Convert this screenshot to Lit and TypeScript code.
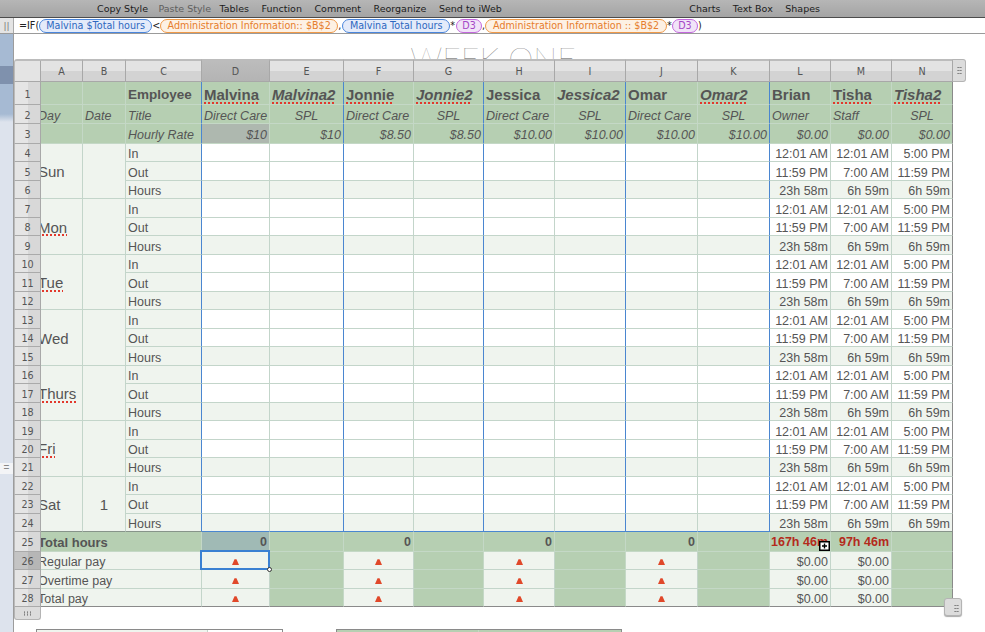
import { LitElement, html, css, nothing } from "lit";
import { customElement } from "lit/decorators.js";

const COLS = ["A", "B", "C", "D", "E", "F", "G", "H", "I", "J", "K", "L", "M", "N"];
const NAMES: [string, boolean, boolean][] = [
  ["Malvina", false, true], ["Malvina2", true, true], ["Jonnie", false, true], ["Jonnie2", true, true],
  ["Jessica", false, false], ["Jessica2", true, false], ["Omar", false, false], ["Omar2", true, true],
  ["Brian", false, false], ["Tisha", false, true], ["Tisha2", true, true],
];
const TITLES: [string, string][] = [
  ["Direct Care", "l"], ["SPL", "c"], ["Direct Care", "l"], ["SPL", "c"], ["Direct Care", "l"], ["SPL", "c"],
  ["Direct Care", "l"], ["SPL", "c"], ["Owner", "l"], ["Staff", "l"], ["SPL", "c"],
];
const RATES = ["$10", "$10", "$8.50", "$8.50", "$10.00", "$10.00", "$10.00", "$10.00", "$0.00", "$0.00", "$0.00"];
const DAYS: [string, boolean, string][] = [
  ["Sun", false, ""], ["Mon", true, ""], ["Tue", true, ""], ["Wed", false, ""],
  ["Thurs", true, ""], ["Fri", true, ""], ["Sat", false, "1"],
];
const TIMES = [
  ["12:01 AM", "12:01 AM", "5:00 PM"],
  ["11:59 PM", "7:00 AM", "11:59 PM"],
  ["23h 58m", "6h 59m", "6h 59m"],
];
const VALUE_COLS = [0, 1, 2, 3, 4, 5, 6, 7, 8, 9, 10];

@customElement("app-root")
export class AppRoot extends LitElement {
  static styles = css`
    :host { display: block; width: 985px; height: 632px; overflow: hidden; background: #fff; font-family: "Liberation Sans", Arial, sans-serif; }
    .toolbar { height: 17px; display: flex; align-items: center; padding-left: 97px; gap: 12.5px; background: linear-gradient(#b6b6b6, #a4a4a4); border-bottom: 1px solid #4c4c4c; font: 9.5px "DejaVu Sans", sans-serif; color: #1c1c1c; }
    .toolbar .copy { margin-right: -2px; }
    .toolbar .off { color: #5f5f5f; margin-right: -4px; }
    .toolbar .right { margin-left: 175px; }
    .formula { height: 15px; display: flex; align-items: center; border-bottom: 1px solid #9a9a9a; background: #fff; font: 9.6px "DejaVu Sans", sans-serif; color: #222; }
    .grip { width: 13px; height: 100%; box-sizing: content-box; border-right: 1px solid #aaa; background: #e4e4e4; color: #777; display: flex; align-items: center; justify-content: center; font-size: 9px; }
    .ftext { padding-left: 5px; display: flex; align-items: center; white-space: pre; }
    .ftext .sp { padding-right: 1px; }
    .tok { box-sizing: border-box; height: 14px; border: 1px solid; border-radius: 7px; display: inline-flex; align-items: center; justify-content: center; }
    .tok.b { color: #2e68c0; border-color: #4a86dc; background: #e4ebfa; }
    .tok.o { color: #e67d2c; border-color: #f09a48; background: #fdf1e4; }
    .tok.p { color: #a548c6; border-color: #c468de; background: #f1e4f8; }
    .main { display: flex; height: 598px; }
    .side { width: 13px; flex: none; border-right: 1px solid #9c9c9c; background: #dde3ed; display: flex; flex-direction: column; }
    .side .blue { height: 88px; background: linear-gradient(#a6bad3 0 32px, #7f91ad 32px 50px, #a6bad3 50px 80px, #dde3ed); }
    .side .split { margin-top: 341px; height: 11px; background: #f3f4f6; color: #888; font-size: 10px; line-height: 10px; text-align: center; }
    .canvas { flex: 1; min-width: 0; overflow: hidden; }
    .title { height: 25px; overflow: hidden; text-align: center; box-sizing: border-box; padding: 8px 0 0 0; margin-left: -13px; font: 100 32px/32px Lato, sans-serif; color: #555; white-space: nowrap; }
    .wrap { position: relative; width: 939px; }
    .grid { display: grid; grid-template-columns: 27px 42px 43px 76px 68px 74px 70px 70px 71px 71px 72px 72px 61px 61px 61px; grid-template-rows: 23px 23px 19px 20px repeat(21, 18.486px) 20px 18px 19px 18px; }
    .ch { box-sizing: border-box; display: flex; align-items: center; justify-content: center; background: linear-gradient(#e3e3e3 0 50%, #d3d3d3 50%); border-top: 2px solid #bcbcbc; border-right: 1px solid #a8a8a8; border-bottom: 1px solid #a8a8a8; font: 9.6px "DejaVu Sans", sans-serif; color: #555; }
    .ch.sel { background: linear-gradient(#bcbcbc, #b4b4b4); }
    .ch.corner { background: #e4e4e4; border-left: 1px solid #bbb; border-radius: 3px 0 0 0; }
    .rh { box-sizing: border-box; display: flex; align-items: center; justify-content: center; padding-top: 2px; background: linear-gradient(90deg, #e5e5e5 0 13px, #d8d8d8 13px); border-left: 1px solid #bbb; border-right: 1px solid #a8a8a8; border-bottom: 1px solid #aaa; font: 9.6px "DejaVu Sans", sans-serif; color: #555; }
    .rh.sel { background: linear-gradient(90deg, #c4c4c4 0 13px, #b6b6b6 13px); }
    .c { box-sizing: border-box; display: flex; align-items: center; min-width: 0; padding: 3px 2px 0; overflow: hidden; white-space: nowrap; font-size: 12.5px; color: #555; border-right: 1px solid #c3d5ca; border-bottom: 1px solid #c3d5ca; background: #fff; }
    .c.g { background: #b6cfb2; border-color: #c4d8c6; }
    .c.t { background: #eff4ee; }
    .c.dark { background: #aeb8af; }
    .c.teal { background: #a0bab5; }
    .c.it { font-style: italic; }
    .c.bold { font-weight: 700; padding-top: 1px; }
    .c.r { justify-content: flex-end; }
    .c.ce { justify-content: center; }
    .c.big { font-size: 15px; padding-top: 1px; }
    .c.emp { font-size: 13.5px; font-weight: 700; }
    .c.name { font-size: 15px; font-weight: 700; }
    .c.total { font-size: 13px; }
    .c.red { color: #b42a1c; }
    .c.blue-r { border-right-color: #4a86d0; }
    .c.blue-b { border-bottom-color: #4a86d0; }
    .c.gray-b { border-bottom-color: #87948a; }
    .c.edge-r { border-right-color: #8a8a8a; }
    .c.edge-b { border-bottom-color: #8a8a8a; }
    .c.s3 { grid-row: span 3; }
    .c.w3 { grid-column: span 3; }
    .c.over { overflow: visible; position: relative; }
    .cut { margin-left: -5px; }
    .sq { text-decoration: underline dotted #e2382c 2px; text-underline-offset: 2px; }
    .tri { width: 7px; height: 6px; display: block; }
    .selbox { position: absolute; left: -2px; top: -2px; width: 70px; height: 20px; box-sizing: border-box; border: 2px solid #3a80d2; z-index: 2; }
    .dot { position: absolute; right: -4px; bottom: -4px; width: 5px; height: 5px; box-sizing: border-box; border: 1px solid #333; border-radius: 50%; background: #fff; }
    .cursor { position: absolute; right: 0; bottom: 0; width: 11px; height: 10px; z-index: 2; display: block; }
    .h { position: absolute; box-sizing: border-box; background: #dcdcdc; border: 1px solid #b4b4b4; color: #777; display: flex; align-items: center; justify-content: center; }
    .h i { display: block; width: 5px; height: 9px; background: radial-gradient(circle, #777 0 0.7px, transparent 1px) 0 0 / 2.5px 3px; }
    .h.top { left: 939px; top: 0; width: 13px; height: 23px; border-left: 0; border-radius: 0 3px 3px 0; }
    .h.bl { left: 0; top: 548px; width: 27px; height: 13px; border-top: 0; border-radius: 0 0 3px 3px; }
    .h.bl i { width: 10px; height: 5px; background-size: 3px 2.5px; }
    .h.br { left: 930px; top: 539px; width: 18px; height: 18px; border-radius: 3px; box-shadow: 0 1px 1px #aaa; align-items: flex-end; justify-content: flex-end; padding: 2px; }
    .lower { display: flex; padding: 22px 0 0 22px; gap: 53px; }
    .lt { display: flex; height: 20px; box-sizing: border-box; border: 1px solid #8a8a8a; }
    .lt.a { width: 247px; }
    .lt.a div:first-child { width: 170px; background: #eff4ee; border-right: 1px solid #c3d5ca; }
    .lt.b { width: 286px; background: #b6cfb2; }
    .lt.b div:first-child { width: 141px; border-right: 1px solid #c4d8c6; }
  `;

  /** Right-border class for value column i (0 = D … 10 = N). */
  private sec(i: number) {
    if (i === 10) return "edge-r";
    return i % 2 === 1 && i < 8 ? "blue-r" : "";
  }

  private triangle() {
    return html`<svg class="tri" viewBox="0 0 7 6"><path d="M2.5 0.2h2L7 6H0z" fill="#e0482a"/></svg>`;
  }

  private payRow(num: number, label: string, bottom: boolean) {
    const eb = bottom ? "edge-b" : "";
    return html`
      <div class="rh ${num === 26 ? "sel" : ""}">${num}</div>
      <div class="c t w3 ${eb}"><span class="cut">${label}</span></div>
      ${VALUE_COLS.map((i) => {
        if (i >= 8 && i < 10) return html`<div class="c t r ${eb}">$0.00</div>`;
        if (i === 10 || i % 2 === 1) return html`<div class="c g ${eb} ${i === 10 ? "edge-r" : ""}"></div>`;
        const sel = num === 26 && i === 0;
        return html`<div class="c t ce ${eb} ${sel ? "over" : ""}">${this.triangle()}${sel ? html`<div class="selbox"><div class="dot"></div></div>` : nothing}</div>`;
      })}
    `;
  }

  private dayBlock(d: [string, boolean, string], idx: number) {
    const start = 4 + idx * 3;
    const last = idx === 6;
    return [0, 1, 2].map((k) => {
      const num = start + k;
      const lastRow = last && k === 2;
      return html`
        <div class="rh">${num}</div>
        ${k === 0
          ? html`
              <div class="c t s3 big ${last ? "gray-b" : ""}"><span class="cut ${d[1] ? "sq" : ""}">${d[0]}</span></div>
              <div class="c t s3 big ce ${last ? "gray-b" : ""}">${d[2]}</div>`
          : nothing}
        <div class="c t blue-r ${lastRow ? "gray-b" : ""}">${["In", "Out", "Hours"][k]}</div>
        ${VALUE_COLS.map((i) => {
          const bb = lastRow ? (i < 8 ? "blue-b" : "gray-b") : "";
          const tint = k === 2 ? "t" : "";
          if (i >= 8) return html`<div class="c r ${tint} ${bb} ${this.sec(i)}">${TIMES[k][i - 8]}</div>`;
          return html`<div class="c ${tint} ${bb} ${this.sec(i)}"></div>`;
        })}
      `;
    });
  }

  render() {
    return html`
      <div class="toolbar">
        <span class="copy">Copy Style</span><span class="off">Paste Style</span><span>Tables</span><span>Function</span><span>Comment</span><span>Reorganize</span><span>Send to iWeb</span>
        <span class="right">Charts</span><span>Text Box</span><span>Shapes</span>
      </div>
      <div class="formula">
        <div class="grip">||</div>
        <div class="ftext">=IF(<span class="tok b" style="width:113px">Malvina $Total hours</span><span>&lt;</span><span class="tok o" style="width:178px">Administration Information:: $B$2</span><span class="sp">,</span><span class="tok b" style="width:108px">Malvina Total hours</span><span class="sp">*</span><span class="tok p" style="width:26px">D3</span><span>,</span><span class="tok o" style="width:182px">Administration Information :: $B$2</span><span>*</span><span class="tok p" style="width:26px">D3</span><span>)</span></div>
      </div>
      <div class="main">
        <div class="side"><div class="blue"></div><div class="split">=</div></div>
        <div class="canvas">
          <div class="title">WEEK ONE</div>
          <div class="wrap">
            <div class="grid">
              <div class="ch corner"></div>
              ${COLS.map((c) => html`<div class="ch ${c === "D" ? "sel" : ""}">${c}</div>`)}

              <div class="rh">1</div>
              <div class="c g"></div><div class="c g"></div><div class="c g emp blue-r">Employee</div>
              ${NAMES.map((n, i) => html`<div class="c g name ${n[1] ? "it" : ""} ${this.sec(i)}"><span class=${n[2] ? "sq" : ""}>${n[0]}</span></div>`)}

              <div class="rh">2</div>
              <div class="c g it"><span class="cut">Day</span></div><div class="c g it">Date</div><div class="c g it blue-r">Title</div>
              ${TITLES.map((t, i) => html`<div class="c g it ${t[1] === "c" ? "ce" : ""} ${this.sec(i)}">${t[0]}</div>`)}

              <div class="rh">3</div>
              <div class="c g"></div><div class="c g"></div><div class="c g it blue-r">Hourly Rate</div>
              ${RATES.map((r, i) => html`<div class="c g it r ${i === 0 ? "dark" : ""} ${this.sec(i)}">${r}</div>`)}

              ${DAYS.map((d, i) => this.dayBlock(d, i))}

              <div class="rh">25</div>
              <div class="c g w3 bold total"><span class="cut">Total hours</span></div>
              ${[0, 1, 2, 3, 4, 5, 6, 7].map((i) => html`<div class="c g bold r ${i === 0 ? "teal" : ""}">${i % 2 === 0 ? "0" : ""}</div>`)}
              <div class="c g bold r red over">167h 46m<svg class="cursor" viewBox="0 0 11 10"><rect x="0.75" y="0.75" width="9.5" height="8.5" fill="#fff" stroke="#000" stroke-width="1.5"/><path d="M3 5h5M5.5 2.5v5" stroke="#000" stroke-width="1.4"/></svg></div>
              <div class="c g bold r red">97h 46m</div>
              <div class="c g edge-r"></div>

              ${this.payRow(26, "Regular pay", false)}
              ${this.payRow(27, "Overtime pay", false)}
              ${this.payRow(28, "Total pay", true)}
            </div>
            <div class="h top"><i></i></div>
            <div class="h bl"><i></i></div>
            <div class="h br"><i></i></div>
          </div>
          <div class="lower">
            <div class="lt a"><div></div><div></div></div>
            <div class="lt b"><div></div><div></div></div>
          </div>
        </div>
      </div>
    `;
  }
}
